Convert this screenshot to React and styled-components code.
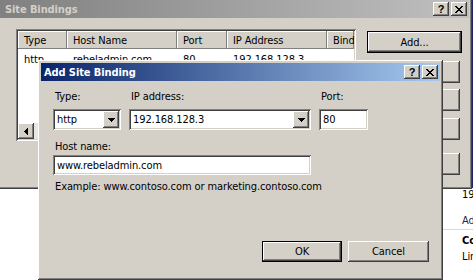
import React from "react";
import styled, { createGlobalStyle, css } from "styled-components";

const GlobalStyle = createGlobalStyle`
  html, body { margin: 0; padding: 0; background: #ffffff; }
  body {
    font-family: "DejaVu Sans Condensed", "DejaVu Sans", "Liberation Sans", sans-serif;
    font-stretch: condensed;
    font-size: 11px;
    letter-spacing: -0.1px;
    color: #000;
  }
  * { box-sizing: border-box; }
`;

const raised = css`
  box-shadow: inset -1px -1px #404040, inset 1px 1px #ffffff,
    inset -2px -2px #808080, inset 2px 2px #d4d0c8;
`;

const sunken = css`
  box-shadow: inset 1px 1px #808080, inset -1px -1px #ffffff,
    inset 2px 2px #404040, inset -2px -2px #d4d0c8;
`;

const Desktop = styled.div`
  position: relative;
  width: 473px;
  height: 280px;
  overflow: hidden;
  background: #ffffff;
`;

/* window behind the dialogs (IIS manager actions pane) */
const BackWindow = styled.div`
  position: absolute;
  left: 443px;
  top: 0;
  width: 40px;
  height: 280px;
  display: flex;
  flex-direction: column;
`;

const BackHeader = styled.div`
  height: 188px;
  background: #1c2560;
`;

const BackList = styled.div`
  flex: 1;
  background: #fff;
  display: flex;
  flex-direction: column;
  padding-left: 19px;
`;

const BackItem = styled.div`
  height: ${(p) => p.$h}px;
  line-height: 14px;
  padding-top: ${(p) => p.$pt || 0}px;
  color: ${(p) => p.$color || "#000"};
  font-weight: ${(p) => (p.$bold ? 700 : 400)};
  border-bottom: ${(p) => (p.$line ? "1px solid #d8d8d8" : "none")};
  margin-left: ${(p) => (p.$line ? "-19px" : "0")};
  padding-left: ${(p) => (p.$line ? "19px" : "0")};
  white-space: nowrap;
`;

const Window = styled.div`
  position: absolute;
  left: ${(p) => p.$x}px;
  top: ${(p) => p.$y}px;
  width: ${(p) => p.$w}px;
  height: ${(p) => p.$h}px;
  background: #d4d0c8;
  padding: 3px;
  display: flex;
  flex-direction: column;
  ${raised};
`;

const TitleBar = styled.div`
  height: 18px;
  flex: none;
  display: flex;
  align-items: center;
  padding: 0 2px 0 ${(p) => p.$pl}px;
  background: ${(p) =>
    p.$active
      ? "linear-gradient(90deg, #0a246a 0%, #a6caf0 100%)"
      : "linear-gradient(90deg, #808080 0%, #c0c0c0 100%)"};
  color: ${(p) => (p.$active ? "#ffffff" : "#d4d0c8")};
`;

const TitleText = styled.span`
  flex: 1;
  font-weight: 700;
  font-size: 11px;
  white-space: nowrap;
`;

const TitleButtons = styled.div`
  display: flex;
  gap: 2px;
`;

const CaptionButton = styled.div`
  width: 16px;
  height: 14px;
  background: #d4d0c8;
  display: flex;
  align-items: center;
  justify-content: center;
  color: #000;
  font-family: "Liberation Sans", sans-serif;
  font-weight: 700;
  font-size: 11px;
  line-height: 1;
  ${raised};
`;

const OuterBody = styled.div`
  flex: 1;
  display: flex;
  gap: 11px;
  padding: 11px 0 0 16px;
`;

const ListView = styled.div`
  width: 340px;
  height: 112px;
  background: #fff;
  padding: 2px;
  display: flex;
  flex-direction: column;
  ${sunken};
`;

const HeaderRow = styled.div`
  display: flex;
  height: 18px;
  flex: none;
  overflow: hidden;
`;

const HeaderCell = styled.div`
  width: ${(p) => (p.$w ? `${p.$w}px` : "auto")};
  flex: ${(p) => (p.$w ? "none" : "1")};
  padding: 0 6px;
  display: flex;
  align-items: center;
  background: #d4d0c8;
  white-space: nowrap;
  overflow: hidden;
  box-shadow: inset -1px -1px #808080, inset 1px 1px #ffffff;
`;

const DataRow = styled.div`
  display: flex;
  height: 16px;
  align-items: center;
  margin-top: 2px;
`;

const DataCell = styled.div`
  width: ${(p) => (p.$w ? `${p.$w}px` : "auto")};
  flex: ${(p) => (p.$w ? "none" : "1")};
  padding: 0 6px;
  white-space: nowrap;
  overflow: hidden;
`;

const ListFill = styled.div`
  flex: 1;
`;

const HScroll = styled.div`
  height: 16px;
  display: flex;
  background: #e8e6e0;
`;

const ScrollButton = styled.div`
  width: 16px;
  height: 16px;
  background: #d4d0c8;
  display: flex;
  align-items: center;
  justify-content: center;
  ${raised};
`;

const SideButtons = styled.div`
  display: flex;
  flex-direction: column;
  gap: 7px;
  padding-top: 2px;
`;

const Button = styled.div`
  width: ${(p) => p.$w}px;
  height: ${(p) => p.$h || 22}px;
  margin-top: ${(p) => p.$mt || 0}px;
  background: #d4d0c8;
  display: flex;
  align-items: center;
  justify-content: center;
  white-space: nowrap;
  ${(p) =>
    p.$default
      ? css`
          border: 1px solid #000;
          ${raised};
        `
      : raised};
`;

const DialogBody = styled.div`
  flex: 1;
  display: flex;
  flex-direction: column;
  padding: 9px 11px 15px 12px;
`;

const FieldRow = styled.div`
  display: flex;
  gap: 8px;
`;

const FieldGroup = styled.div`
  width: ${(p) => p.$w}px;
  display: flex;
  flex-direction: column;
`;

const Label = styled.div`
  height: 14px;
  line-height: 14px;
  padding-left: 2px;
  margin-top: ${(p) => p.$mt || 0}px;
  margin-bottom: ${(p) => p.$mb || 0}px;
  white-space: nowrap;
`;

const Combo = styled.div`
  height: 21px;
  background: #fff;
  display: flex;
  align-items: center;
  padding: 2px;
  ${sunken};
`;

const ComboText = styled.span`
  flex: 1;
  padding-left: 2px;
  white-space: nowrap;
`;

const DropButton = styled.div`
  width: 16px;
  height: 17px;
  background: #d4d0c8;
  display: flex;
  align-items: center;
  justify-content: center;
  ${raised};
`;

const TextBox = styled.div`
  width: ${(p) => (p.$w ? `${p.$w}px` : "100%")};
  height: ${(p) => p.$h || 21}px;
  background: #fff;
  display: flex;
  align-items: center;
  padding: 0 4px;
  white-space: nowrap;
  ${sunken};
`;

const Hint = styled.div`
  margin-top: 5px;
  padding-left: 2px;
  height: 14px;
  line-height: 14px;
  white-space: nowrap;
`;

const ButtonRow = styled.div`
  margin-top: auto;
  display: flex;
  justify-content: flex-end;
  gap: 6px;
`;

const CloseGlyph = () => (
  <svg width="8" height="7" viewBox="0 0 8 7" shapeRendering="crispEdges">
    <path d="M0 0h2v1h-2zM6 0h2v1h-2zM1 1h2v1h-2zM5 1h2v1h-2zM2 2h4v1h-4zM3 3h2v1h-2zM2 4h4v1h-4zM1 5h2v1h-2zM5 5h2v1h-2zM0 6h2v1h-2zM6 6h2v1h-2z" fill="#000" />
  </svg>
);

const DownArrow = () => (
  <svg width="7" height="4" viewBox="0 0 7 4" shapeRendering="crispEdges">
    <path d="M0 0h7v1h-7zM1 1h5v1h-5zM2 2h3v1h-3zM3 3h1v1h-1z" fill="#000" />
  </svg>
);

const LeftArrow = () => (
  <svg width="4" height="7" viewBox="0 0 4 7" shapeRendering="crispEdges">
    <path d="M3 0h1v7h-1zM2 1h1v5h-1zM1 2h1v3h-1zM0 3h1v1h-1z" fill="#000" />
  </svg>
);

const Caption = ({ title, active, pl }) => (
  <TitleBar $active={active} $pl={pl}>
    <TitleText>{title}</TitleText>
    <TitleButtons>
      <CaptionButton>?</CaptionButton>
      <CaptionButton>
        <CloseGlyph />
      </CaptionButton>
    </TitleButtons>
  </TitleBar>
);

const columns = [
  { key: "type", label: "Type", w: 49 },
  { key: "host", label: "Host Name", w: 110 },
  { key: "port", label: "Port", w: 50 },
  { key: "ip", label: "IP Address", w: 100 },
  { key: "bind", label: "Binding" },
];

const row = { type: "http", host: "rebeladmin.com", port: "80", ip: "192.168.128.3", bind: "" };

export default function App() {
  return (
    <Desktop>
      <GlobalStyle />
      <BackWindow>
        <BackHeader />
        <BackList>
          <BackItem $h={26}>192.168.128.3</BackItem>
          <BackItem $h={16} $line $color="#1c2560">Add...</BackItem>
          <BackItem $h={20} $pt={4} $bold>Configure</BackItem>
          <BackItem $h={16}>Limits...</BackItem>
        </BackList>
      </BackWindow>

      <Window $x={-3} $y={-3} $w={475} $h={192}>
        <Caption title="Site Bindings" pl={5} />
        <OuterBody>
          <ListView>
            <HeaderRow>
              {columns.map((c) => (
                <HeaderCell key={c.key} $w={c.w}>{c.label}</HeaderCell>
              ))}
            </HeaderRow>
            <DataRow>
              {columns.map((c) => (
                <DataCell key={c.key} $w={c.w}>{row[c.key]}</DataCell>
              ))}
            </DataRow>
            <ListFill />
            <HScroll>
              <ScrollButton>
                <LeftArrow />
              </ScrollButton>
            </HScroll>
          </ListView>
          <SideButtons>
            <Button $w={95} $default>Add...</Button>
            <Button $w={93} $mt={1} />
            <Button $w={93} $mt={-1} />
            <Button $w={93} />
            <Button $w={93} $mt={6} />
          </SideButtons>
        </OuterBody>
      </Window>

      <Window $x={38} $y={60} $w={405} $h={220}>
        <Caption title="Add Site Binding" active pl={3} />
        <DialogBody>
          <FieldRow>
            <FieldGroup $w={68}>
              <Label $mb={5}>Type:</Label>
              <Combo>
                <ComboText>http</ComboText>
                <DropButton>
                  <DownArrow />
                </DropButton>
              </Combo>
            </FieldGroup>
            <FieldGroup $w={182}>
              <Label $mb={5}>IP address:</Label>
              <Combo>
                <ComboText>192.168.128.3</ComboText>
                <DropButton>
                  <DownArrow />
                </DropButton>
              </Combo>
            </FieldGroup>
            <FieldGroup $w={49}>
              <Label $mb={5}>Port:</Label>
              <TextBox>80</TextBox>
            </FieldGroup>
          </FieldRow>
          <Label $mt={10} $mb={1}>Host name:</Label>
          <TextBox $w={258} $h={20}>www.rebeladmin.com</TextBox>
          <Hint>Example: www.contoso.com or marketing.contoso.com</Hint>
          <ButtonRow>
            <Button $w={80} $h={21} $default>OK</Button>
            <Button $w={81} $h={21}>Cancel</Button>
          </ButtonRow>
        </DialogBody>
      </Window>
    </Desktop>
  );
}
